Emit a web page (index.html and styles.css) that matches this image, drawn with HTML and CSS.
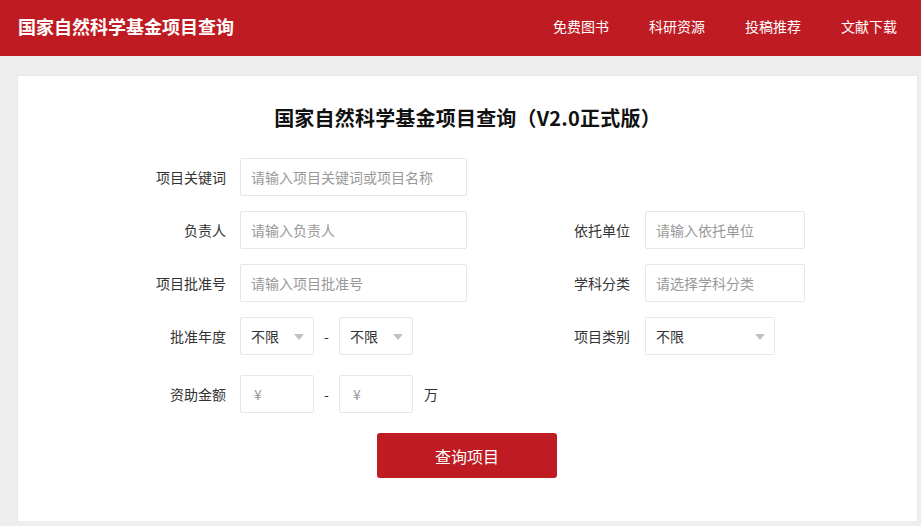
FILE: index.html
```html
<!DOCTYPE html>
<html lang="zh-CN">
<head>
    <meta charset="UTF-8">
    <meta name="viewport" content="width=device-width, initial-scale=1.0">
    <title>国家自然科学基金项目查询</title>
    <link rel="stylesheet" href="styles.css">
</head>
<body>
    <header class="topbar">
        <div class="logo">国家自然科学基金项目查询</div>
        <nav class="nav">
            <a href="#">免费图书</a>
            <a href="#">科研资源</a>
            <a href="#">投稿推荐</a>
            <a href="#">文献下载</a>
        </nav>
    </header>

    <main class="card">
        <h1>国家自然科学基金项目查询（V2.0正式版）</h1>

        <form class="search-form" onsubmit="return false;">
            <div class="form-row">
                <div class="field field-main">
                    <label class="field-label">项目关键词</label>
                    <input class="text-input" type="text" placeholder="请输入项目关键词或项目名称">
                </div>
            </div>

            <div class="form-row">
                <div class="field field-main">
                    <label class="field-label">负责人</label>
                    <input class="text-input" type="text" placeholder="请输入负责人">
                </div>
                <div class="field field-side">
                    <label class="field-label">依托单位</label>
                    <input class="text-input input-short" type="text" placeholder="请输入依托单位">
                </div>
            </div>

            <div class="form-row">
                <div class="field field-main">
                    <label class="field-label">项目批准号</label>
                    <input class="text-input" type="text" placeholder="请输入项目批准号">
                </div>
                <div class="field field-side">
                    <label class="field-label">学科分类</label>
                    <input class="text-input input-short" type="text" placeholder="请选择学科分类">
                </div>
            </div>

            <div class="form-row">
                <div class="field field-main">
                    <label class="field-label">批准年度</label>
                    <div class="select-box select-small"><span>不限</span></div>
                    <span class="range-sep">-</span>
                    <div class="select-box select-small"><span>不限</span></div>
                </div>
                <div class="field field-side">
                    <label class="field-label">项目类别</label>
                    <div class="select-box select-wide"><span>不限</span></div>
                </div>
            </div>

            <div class="form-row row-money">
                <div class="field field-main">
                    <label class="field-label">资助金额</label>
                    <input class="text-input input-money" type="text" placeholder="¥">
                    <span class="range-sep">-</span>
                    <input class="text-input input-money" type="text" placeholder="¥">
                    <span class="unit">万</span>
                </div>
            </div>

            <div class="form-actions">
                <button class="btn" type="submit">查询项目</button>
            </div>
        </form>
    </main>
</body>
</html>
```

FILE: styles.css
```css
body {
    font-family: "Noto Sans CJK SC", "Liberation Sans", sans-serif;
    margin: 0;
    padding: 0;
    background: #eeeeee;
    color: #333;
    font-size: 14px;
}

.topbar {
    box-sizing: border-box;
    height: 56px;
    background: #be1b22;
    display: flex;
    align-items: center;
    justify-content: space-between;
    padding: 0 24px 4px 18px;
}

.logo {
    color: #fff;
    font-size: 18px;
    font-weight: bold;
}

.nav {
    display: flex;
    gap: 40px;
}

.nav a {
    color: #fff;
    text-decoration: none;
    font-size: 14px;
}

.card {
    background: #fff;
    margin: 20px 4px 0 18px;
    padding: 28px 0 43px;
    box-shadow: 0 0 2px rgba(0, 0, 0, 0.08);
}

h1 {
    margin: 0;
    text-align: center;
    font-size: 20px;
    line-height: 28px;
    font-weight: bold;
    letter-spacing: 0.2px;
    color: #111;
}

.search-form {
    margin-top: 26px;
    padding-left: 128px;
}

.form-row {
    display: flex;
    margin-bottom: 15px;
}

.row-money {
    margin-top: 20px;
    margin-bottom: 20px;
}

.field {
    display: flex;
    align-items: center;
}

.field-main {
    width: 414px;
}

.field-label {
    width: 80px;
    margin-right: 14px;
    text-align: right;
    color: #333;
}

.field-side .field-label {
    width: 70px;
    margin-right: 15px;
}

.text-input {
    box-sizing: border-box;
    width: 227px;
    height: 38px;
    border: 1px solid #e6e6e6;
    border-radius: 2px;
    padding: 0 10px;
    font-family: inherit;
    font-size: 14px;
    color: #333;
    outline: none;
}

.text-input::placeholder {
    color: #999;
}

.input-short {
    width: 160px;
}

.input-money {
    width: 74px;
    padding-left: 13px;
}

.select-box {
    box-sizing: border-box;
    position: relative;
    height: 38px;
    border: 1px solid #e6e6e6;
    border-radius: 2px;
    padding: 0 10px;
    display: flex;
    align-items: center;
    color: #333;
}

/* little grey caret on the right */
.select-box::after {
    content: "";
    position: absolute;
    right: 9px;
    top: 16px;
    border-left: 5px solid transparent;
    border-right: 5px solid transparent;
    border-top: 6px solid #c2c2c2;
}

.select-small {
    width: 74px;
}

.select-wide {
    width: 130px;
}

.range-sep {
    width: 25px;
    text-align: center;
    color: #333;
}

.unit {
    margin-left: 11px;
    color: #333;
}

.form-actions {
    display: flex;
    justify-content: center;
    padding-right: 128px;
    margin-left: -1px;
}

.btn {
    width: 180px;
    height: 45px;
    background: #be1b22;
    color: #fff;
    border: none;
    border-radius: 3px;
    font-family: inherit;
    font-size: 16px;
    cursor: pointer;
}

.btn:hover {
    background: #a8161c;
}
```
